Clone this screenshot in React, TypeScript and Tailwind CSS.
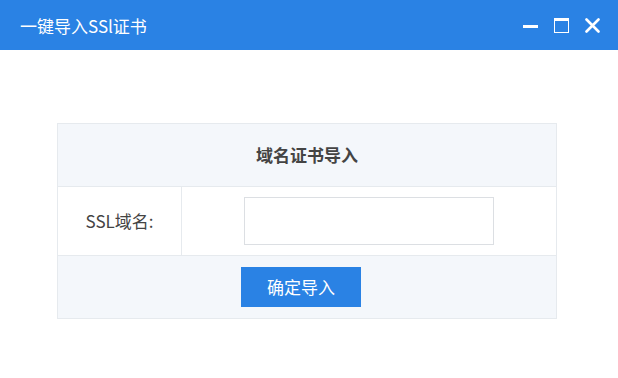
import React from "react";

const font = { fontFamily: '"Noto Sans CJK SC", "Liberation Sans", sans-serif' };

export default function App() {
    return (
        <div className="w-[618px] h-[378px] bg-white" style={font}>
            <header className="h-[50px] bg-[#2a82e4] flex items-center justify-between pl-[20px] pr-[18px] text-white">
                <h1 className="text-[17px] leading-none">一键导入SSl证书</h1>
                <div className="flex items-center gap-[16px]">
                    <svg width="15" height="15" viewBox="0 0 15 15">
                        <rect x="0" y="7" width="15" height="3" fill="#fff" />
                    </svg>
                    <svg width="15" height="15" viewBox="0 0 15 15">
                        <rect x="0.5" y="0.5" width="14" height="14" fill="none" stroke="#fff" />
                        <rect x="0" y="0" width="15" height="3" fill="#fff" />
                    </svg>
                    <svg width="15" height="15" viewBox="0 0 15 15">
                        <path d="M1.5 1.5 L13.5 13.5 M13.5 1.5 L1.5 13.5" stroke="#fff" strokeWidth="2.6" strokeLinecap="round" />
                    </svg>
                </div>
            </header>

            <div className="pt-[73px] pl-[57px]">
                <div className="w-[500px] border border-[#e6eaee]">
                    <div className="h-[63px] bg-[#f4f7fb] flex items-center justify-center border-b border-[#e6eaee]">
                        <span className="text-[17px] font-bold text-[#444]">域名证书导入</span>
                    </div>
                    <div className="h-[69px] flex border-b border-[#e6eaee]">
                        <div className="w-[124px] border-r border-[#e6eaee] flex items-center justify-center text-[17px] text-[#444]">
                            SSL域名:
                        </div>
                        <div className="flex-1 flex items-center justify-center">
                            <input className="w-[250px] h-[48px] border border-[#dcdfe3] outline-none px-2" />
                        </div>
                    </div>
                    <div className="h-[62px] bg-[#f4f7fb] flex items-center justify-center pr-[12px]">
                        <button className="w-[120px] h-[40px] bg-[#2a82e4] text-white text-[17px]">确定导入</button>
                    </div>
                </div>
            </div>
        </div>
    );
}
